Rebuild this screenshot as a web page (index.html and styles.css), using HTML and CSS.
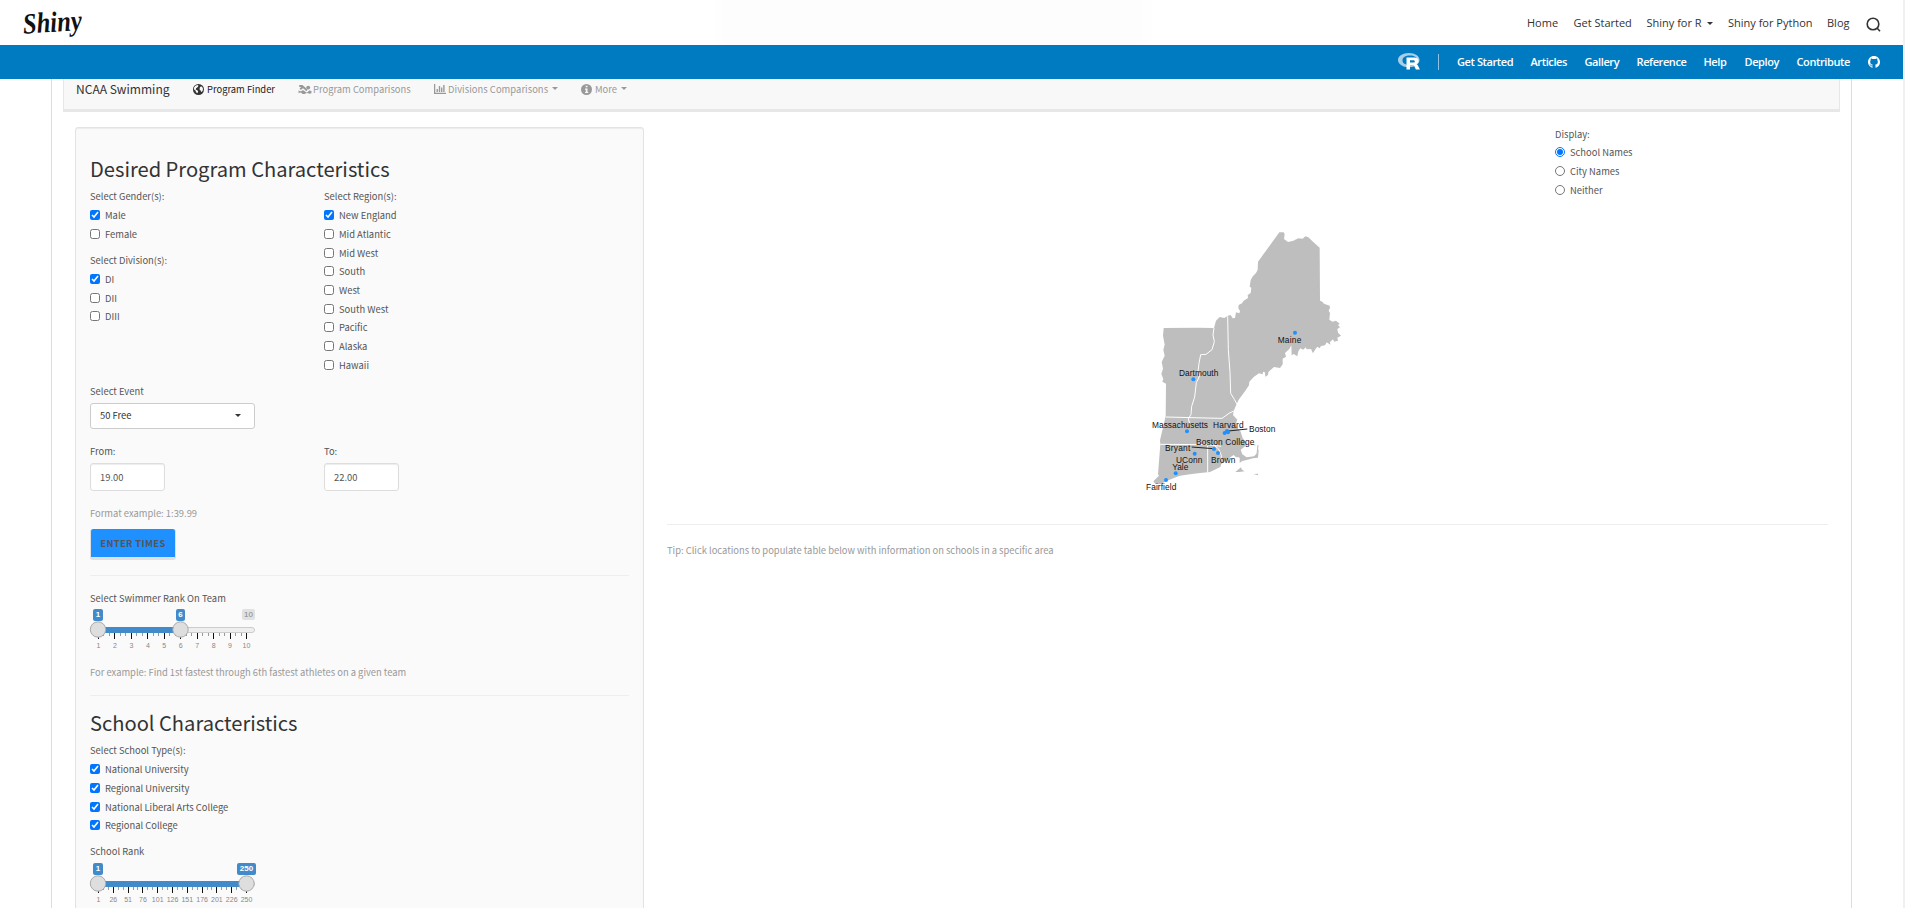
FILE: index.html
```html
<!DOCTYPE html>
<html lang="en">
<head>
<meta charset="utf-8">
<title>NCAA Swimming</title>
<link rel="stylesheet" href="styles.css">
</head>
<body>
<div class="page">
  <header class="topbar">
    <svg class="logo" width="62" height="32" viewBox="0 0 62 32"><text class="logo-text" x="2" y="24" textLength="59" lengthAdjust="spacingAndGlyphs" transform="rotate(-4 28 18)">Shiny</text></svg>
    <nav class="topnav">
      <a class="w-home">Home</a><a class="w-get">Get Started</a><a class="w-r">Shiny for R<i class="caret"></i></a><a class="w-py">Shiny for Python</a><a class="w-blog">Blog</a>
      <svg class="search" width="15" height="15" viewBox="0 0 15 15"><circle cx="7" cy="7" r="5.8"/><path d="M11 11l3 3.2"/></svg>
    </nav>
  </header>
  <nav class="bluebar">
    <svg class="rlogo" width="22" height="17" viewBox="0 0 22 17"><path class="ring" fill-rule="evenodd" d="M10.8 0C17 0 21.500 3 21.500 7s-4.500 7.200-10.700 7.200S0 11 0 7 4.800 0 10.800 0zM12 2.600C7.500 2.600 4.500 4.500 4.500 7.400s3 4.500 7.500 4.500 7-1.800 7-4.700-2.600-4.600-7-4.600z"/><path class="letter" fill-rule="evenodd" d="M8.500 4.500h8c2.500 0 4 1.300 4 3.400 0 1.600-.9 2.600-2.200 3 .8.300 1.200 1 1.600 1.700l2 3.900h-4l-1.700-3.500c-.4-.8-.8-1-1.600-1H12v4.500H8.500zM12 7.200v2.400h3c1.200 0 1.800-.4 1.800-1.200S16.200 7.200 15 7.200z"/></svg>
    <span class="divider"></span>
    <a class="b1">Get Started</a><a class="b2">Articles</a><a class="b3">Gallery</a><a class="b4">Reference</a><a class="b5">Help</a><a class="b6">Deploy</a><a class="b7">Contribute</a>
    <svg class="github" width="12" height="12" viewBox="0 0 16 16"><path d="M8 0C3.580 0 0 3.580 0 8c0 3.540 2.290 6.530 5.470 7.590.4.070.55-.17.55-.38 0-.19-.01-.82-.01-1.490-2.010.37-2.530-.49-2.690-.94-.09-.23-.48-.94-.82-1.130-.28-.15-.68-.52-.01-.53.63-.01 1.080.58 1.230.82.720 1.210 1.870.87 2.330.66.070-.52.280-.87.510-1.070-1.780-.2-3.640-.89-3.640-3.950 0-.87.310-1.590.82-2.150-.08-.2-.36-1.020.08-2.120 0 0 .67-.21 2.200.82a7.600 7.600 0 014 0c1.530-1.040 2.200-.82 2.200-.82.440 1.100.16 1.920.08 2.120.51.560.82 1.270.82 2.150 0 3.070-1.870 3.750-3.650 3.950.29.25.54.73.54 1.480 0 1.070-.01 1.930-.01 2.200 0 .21.150.46.550.38A8 8 0 0016 8c0-4.420-3.580-8-8-8z"/></svg>
  </nav>
  <main class="frame">
    <nav class="navbar">
      <span class="brand">NCAA Swimming</span>
      <a class="tab active n1"><svg width="11" height="11" viewBox="0 0 16 16"><circle cx="8" cy="8" r="8" fill="#333"/><path d="M3.500 2.500l3-1 1.500 1-1 2-2.500 1.500L4 8l2 1 1.500 1-.5 2.500-1 1L4.500 12 3.500 9.500 1.500 8V5z" fill="#f8f8f8"/><path d="M10.500 4l2.500-.5 1.500 3L14 10l-2 1.500-1.200-2.500-1.300-1 .3-2.500z" fill="#f8f8f8"/></svg><span>Program Finder</span></a>
      <a class="tab n2"><svg width="14" height="9" viewBox="0 0 20 14"><path d="M1 1.500h4.500l3.500 3 4 4M2.500 6.500l4-3.500" fill="none" stroke="#999" stroke-width="3"/><circle cx="15" cy="4" r="3" fill="#999"/><path d="M0 8q3 3 5 1t5 1 5 0 5-.5v3.500q-3 1.500-5 0t-5 .5-5-.5-5 0z" fill="#999"/></svg><span>Program Comparisons</span></a>
      <a class="tab n3"><svg width="12" height="10" viewBox="0 0 12 10"><path d="M.6 0v9.300H12" fill="none" stroke="#999" stroke-width="1.300"/><path d="M2.500 5h1.400v3H2.500zM4.800 2h1.400v6H4.800zM7 3.500h1.400V8H7zM9.200 1h1.400v7H9.200z" fill="#999"/></svg><span>Divisions Comparisons</span><i class="caret"></i></a>
      <a class="tab n4"><svg width="11" height="11" viewBox="0 0 16 16"><circle cx="8" cy="8" r="8" fill="#999"/><path d="M6.800 2.500h2.700v2.400H6.800zM5.800 6.500h3.700v5h1.200v1.700H5.800v-1.700H7V8.200H5.800z" fill="#f8f8f8"/></svg><span>More</span><i class="caret"></i></a>
    </nav>
    <div class="content">
      <aside class="well">
        <h2>Desired Program Characteristics</h2>
        <div class="cols criteria">
          <div>
            <div class="label">Select Gender(s):</div>
            <label class="opt"><input type="checkbox" checked>Male</label>
            <label class="opt"><input type="checkbox">Female</label>
            <div class="label second">Select Division(s):</div>
            <label class="opt"><input type="checkbox" checked>DI</label>
            <label class="opt"><input type="checkbox">DII</label>
            <label class="opt"><input type="checkbox">DIII</label>
          </div>
          <div>
            <div class="label">Select Region(s):</div>
            <label class="opt"><input type="checkbox" checked>New England</label>
            <label class="opt"><input type="checkbox">Mid Atlantic</label>
            <label class="opt"><input type="checkbox">Mid West</label>
            <label class="opt"><input type="checkbox">South</label>
            <label class="opt"><input type="checkbox">West</label>
            <label class="opt"><input type="checkbox">South West</label>
            <label class="opt"><input type="checkbox">Pacific</label>
            <label class="opt"><input type="checkbox">Alaska</label>
            <label class="opt"><input type="checkbox">Hawaii</label>
          </div>
        </div>
        <div class="label">Select Event</div>
        <div class="select"><span>50 Free</span><i class="caret"></i></div>
        <div class="cols times">
          <div><div class="label">From:</div><div class="field">19.00</div></div>
          <div><div class="label">To:</div><div class="field">22.00</div></div>
        </div>
        <div class="help">Format example: 1:39.99</div>
        <button class="btn">ENTER TIMES</button>
        <hr class="hr1">
        <div class="label">Select Swimmer Rank On Team</div>
        <svg class="slider" id="s1" width="170" height="44" viewBox="0 0 170 44"></svg>
        <div class="help example">For example: Find 1st fastest through 6th fastest athletes on a given team</div>
        <hr class="hr2">
        <h2 class="school">School Characteristics</h2>
        <div class="label">Select School Type(s):</div>
        <label class="opt"><input type="checkbox" checked>National University</label>
        <label class="opt"><input type="checkbox" checked>Regional University</label>
        <label class="opt"><input type="checkbox" checked>National Liberal Arts College</label>
        <label class="opt"><input type="checkbox" checked>Regional College</label>
        <div class="label rank">School Rank</div>
        <svg class="slider" id="s2" width="170" height="44" viewBox="0 0 170 44"></svg>
      </aside>
      <section class="results">
        <div class="maprow">
          <svg class="map" width="230" height="290" viewBox="0 0 690 870">
            <g class="land">
              <path d="M101 327L200 326 252 327 258 305 269 294 283 297 294 290 302 288 308 298 315 297 318 280 328 283 330 276 325 268 326 258 336 253 341 245 354 237 353 228 362 222 364 206 359 203 362 183 369 171 378 162 383 152 384 128 448 40 461 40 464 46 462 60 474 69 490 65 505 58 518 59 526 52 535 55 549 68 569 86 570 245 577 248 582 254 599 260 600 266 596 275 600 282 598 302 607 308 618 305 629 314 624 318 630 325 622 330 624 341 633 350 622 356 624 365 613 368 609 361 600 369 601 377 590 370 585 379 573 381 569 388 562 383 556 391 549 403 543 390 530 391 527 385 520 392 511 388 505 397 502 412 491 405 485 409 484 379 478 390 465 402 468 413 458 419 458 436 450 447 432 444 415 459 414 468 406 473 405 460 399 458 398 466 387 463 372 473 358 488 357 499 346 515 335 530 326 542 320 555 311 576 309 588 322 602 316 618 332 638 338 658 348 669 346 681 332 692 337 706 350 715 372 712 382 702 381 681 386 695 384 716 369 718 350 723 334 727 327 715 318 715 311 708 302 714 289 724 274 735 271 744 240 759 210 762 180 766 150 770 126 779 108 787 92 795 76 795 70 787 87 770 84 766 91 676 90 664 107 592 108 494 97 488 100 480 94 465 99 449 95 429 104 410 100 392 104 377 99 350z"/>
              <path d="M329 721l4-9 2 16-6 3zM316 759l17-14 3 7 8 5-16 2zM370 765l14-1v5z"/>
              <path class="thin" d="M364 676l12 2M381 705l3-27"/>
            </g>
            <path class="state" d="M252 327l-3 21 4 20-7 24-18 14-16 1-5 26-3 24 5 12-3 8-7 14-5 43-9 28-2 24-8 14 4 13M293 292l2 100 5 69 2 62 11 18 8 15M108 594l120 3 48 1 21-15 14-7M91 676l142 1 40 5M233 680v81M254 680l12 10 8 19-1 17"/>
            <g class="lead"><path d="M352 630L295 636M185 684L250 689"/></g>
            <g class="dots"><circle cx="495" cy="341" r="6"/><circle cx="190" cy="481" r="6"/><circle cx="171" cy="637" r="6"/><circle cx="284" cy="642" r="6"/><circle cx="291" cy="636" r="6"/><circle cx="294" cy="640" r="6"/><circle cx="252" cy="690" r="6"/><circle cx="264" cy="702" r="6"/><circle cx="194" cy="704" r="6"/><circle cx="137" cy="763" r="6"/><circle cx="108" cy="783" r="6"/></g>
            <g class="names">
              <text x="443" y="372" textLength="71">Maine</text>
              <text x="147" y="470" textLength="118">Dartmouth</text>
              <text x="66" y="626" textLength="168">Massachusetts</text>
              <text x="249" y="626" textLength="92">Harvard</text>
              <text x="357" y="638" textLength="79">Boston</text>
              <text x="198" y="677" textLength="175">Boston College</text>
              <text x="105" y="695" textLength="76">Bryant</text>
              <text x="138" y="731" textLength="79">UConn</text>
              <text x="243" y="731" textLength="73">Brown</text>
              <text x="127" y="752" textLength="48">Yale</text>
              <text x="48" y="812" textLength="91">Fairfield</text>
            </g>
          </svg>
          <div class="display">
            <div class="label">Display:</div>
            <label class="opt"><input type="radio" name="d" checked>School Names</label>
            <label class="opt"><input type="radio" name="d">City Names</label>
            <label class="opt"><input type="radio" name="d">Neither</label>
          </div>
        </div>
        <hr class="hrmap">
        <div class="help tip">Tip: Click locations to populate table below with information on schools in a specific area</div>
      </section>
    </div>
  </main>
</div>
<script src="sliders.js"></script>
</body>
</html>
```
FILE: styles.css
```css
* { box-sizing: border-box; }
html, body { height: 100%; overflow: hidden; }
body { margin: 0; background: #f1f1f1; font-family: "Noto Sans CJK SC", sans-serif; font-size: 9.380px; color: #555; }
.page { width: 1903px; height: 908px; background: #fff; overflow: hidden; }

.topbar { height: 45px; display: flex; justify-content: space-between; align-items: center; padding: 0 22px 0 21px; font: 11px/45px "Open Sans", sans-serif; color: #333; background: linear-gradient(90deg, #fff 710px, #fdfdfd 725px, #fdfdfd 1140px, #fff 1155px); }
.logo { margin-top: 2px; overflow: visible; }
.logo-text { font: italic bold 29px "Liberation Serif", serif; fill: #111; }
.topnav { display: flex; align-items: center; white-space: nowrap; }
.w-home { width: 46.500px; }
.w-get { width: 73px; }
.w-r { width: 81.500px; }
.w-py { width: 99px; }
.w-blog { width: 39px; }
.caret { display: inline-block; width: 0; height: 0; border: 3px solid transparent; border-top-color: currentColor; border-bottom: 0; vertical-align: middle; }
.w-r .caret { margin-left: 5px; margin-top: -1px; }
.search { margin-top: 4px; fill: none; stroke: #333; stroke-width: 1.600; }

.bluebar { height: 34px; background: #007bc2; display: flex; align-items: center; justify-content: flex-end; padding-right: 23px; font: 600 11px/34px "Open Sans", sans-serif; letter-spacing: -.4px; color: #fff; white-space: nowrap; }
.rlogo { margin-top: -1px; }
.ring { fill: #a9cfe8; }
.letter { fill: #fff; }
.divider { width: 1px; height: 16px; background: #8fc3e3; margin: 0 18px 0 18px; }
.b1 { width: 73.500px; }
.b2 { width: 54px; }
.b3 { width: 52px; }
.b4 { width: 67px; }
.b5 { width: 41px; }
.b6 { width: 52px; }
.b7 { width: 71.500px; }
.github { fill: #fff; }

.frame { margin-left: 51px; width: 1801px; height: 829px; border: solid #ddd; border-width: 0 1px; padding: 0 11px; }
.navbar { height: 33px; background: #f8f8f8; border: solid #e7e7e7; border-width: 0 1px 3px; padding: 0 0 11px 12px; display: flex; align-items: center; white-space: nowrap; color: #999; }
.brand { width: 117px; font-size: 12.050px; line-height: 20px; color: #333; }
.tab { display: flex; align-items: center; line-height: 20px; font-size: 9.380px; }
.tab svg { margin: 1px 3px 0 0; flex: none; }
.active { color: #222; }
.n1 { width: 105px; }
.n2 { width: 136px; }
.n2 svg { margin-right: 1px; }
.n3 { width: 147px; }
.n3 svg { margin-right: 2px; }
.n3 span { letter-spacing: .05px; }
.tab .caret { margin-left: 4px; }

.content { display: flex; margin: 15px 0 0 12px; }
.well { width: 569px; height: 800px; background: #fafafa; border: 1px solid #e3e3e3; border-radius: 3px; box-shadow: inset 0 1px 1px rgba(0,0,0,.06); padding: 27px 14px 0; }
h2 { margin: 0; font-size: 20.120px; line-height: 28px; font-weight: 400; color: #333; white-space: nowrap; }
.cols { display: grid; grid-template-columns: 234px 1fr; }
.criteria { padding-top: 5px; height: 200px; }
.label, .help { line-height: 16px; height: 16px; white-space: nowrap; }
.help { color: #999; }
.label + .opt { margin-top: 1.800px; }
.opt { display: flex; align-items: center; height: 18.720px; white-space: nowrap; line-height: 18px; }
.opt input { width: 10px; height: 10px; margin: 0 5px 0 0; accent-color: #0075ff; flex: none; }
.second { margin-top: 8.600px; }
.select { width: 165px; height: 26px; margin-top: 4px; border: 1px solid #ccc; border-radius: 3px; background: #fff; display: flex; align-items: center; justify-content: space-between; padding: 0 13px 2px 9px; color: #333; }
.times { margin-top: 14px; }
.field { width: 75px; height: 28px; margin-top: 4px; border: 1px solid #ddd; border-radius: 3px; background: #fff; box-shadow: inset 0 1px 1px rgba(0,0,0,.075); padding-left: 9px; line-height: 26px; }
.times + .help { margin-top: 14px; }
.btn { display: block; width: 86px; height: 31px; margin: 8px 0 0; padding: 0; border: solid #e0e0e0; border-width: 0 1px 3px; border-radius: 3px; background: #1e90ff; color: #555; font: bold 9.300px/29px "Noto Sans CJK SC", sans-serif; letter-spacing: .4px; white-space: nowrap; }
hr { border: 0; border-top: 1px solid #eee; margin: 0; }
.hr1 { margin: 15px 0 14px; }
.slider { display: block; overflow: visible; margin-top: 3px; font-family: "Liberation Sans", Arial, sans-serif; }
.example { margin-top: 11px; }
.hr2 { margin-top: 15px; }
.school { margin: 13px 0 5px; }
.rank { margin-top: 8px; }
.rank + .slider { margin-top: 4px; }

.results { margin-left: 23px; width: 1161px; }
.maprow { display: flex; padding-left: 463px; height: 397px; }
.map { margin-top: 92px; flex: none; }
.display { margin: -1px 0 0 195px; }
.display .label + .opt { margin-top: 1px; }
.land { fill: #bebebe; }
.thin { fill: none; stroke: #bebebe; stroke-width: 3; }
.state { fill: none; stroke: #fff; stroke-width: 3; }
.lead { stroke: #222; stroke-width: 3; }
.dots { fill: #1e90ff; }
.names { font: 25px "Liberation Sans", Arial, sans-serif; fill: #111; }
.tip { margin-top: 17px; }
.badge { fill: #428bca; }
.badge-text { fill: #fff; font-size: 8px; text-anchor: middle; font-weight: 700; }
.max { fill: #e1e1e1; }
.max-text { fill: #888; font-size: 8px; text-anchor: middle; }
.track { fill: #eee; stroke: #ccc; }
.bar { fill: #428bca; }
.major { stroke: #111; }
.minor { stroke: #999; }
.grid { fill: #888; font-size: 7px; text-anchor: middle; }
.handle { fill: #dedede; stroke: #aaa; }
```
FILE: sliders.js
```js
function slider(id, labels, from, to, badgeTo, badgeWidth, max) {
  const x0 = 8.5, x1 = 156.5, step = (x1 - x0) / (labels.length - 1);
  let s = '<rect class="track" x=".5" y="18.500" width="164" height="5" rx="2.500"/>';
  s += `<rect class="bar" x="${from}" y="18" width="${to - from}" height="6"/>`;
  labels.forEach((t, i) => {
    const x = x0 + i * step;
    s += `<path class="major" d="M${Math.floor(x) + .5} 24v6"/>`;
    if (i < labels.length - 1) for (let k = 1; k < 3; k++) s += `<path class="minor" d="M${Math.floor(x + k * step / 3) + .5} 24v3"/>`;
    s += `<text class="grid" x="${x}" y="38.500">${t}</text>`;
  });
  const badge = (x, w, t) => `<rect class="badge" x="${x - w / 2}" y="0" width="${w}" height="12" rx="2"/><text class="badge-text" x="${x}" y="7.500">${t}</text>`;
  if (max) s += `<rect class="max" x="152" y="0" width="13" height="11" rx="2"/><text class="max-text" x="158.500" y="7.500">${max}</text>`;
  s += badge(8, 10, '1') + badge(to, badgeWidth, badgeTo);
  s += `<circle class="handle" cx="8" cy="20.500" r="7.700"/><circle class="handle" cx="${to}" cy="20.500" r="7.700"/>`;
  document.getElementById(id).innerHTML = s;
}
slider('s1', [1, 2, 3, 4, 5, 6, 7, 8, 9, 10], 8, 90.500, '6', 9, '10');
slider('s2', [1, 26, 51, 76, 101, 126, 151, 176, 201, 226, 250], 8, 156.500, '250', 19, null);
```
